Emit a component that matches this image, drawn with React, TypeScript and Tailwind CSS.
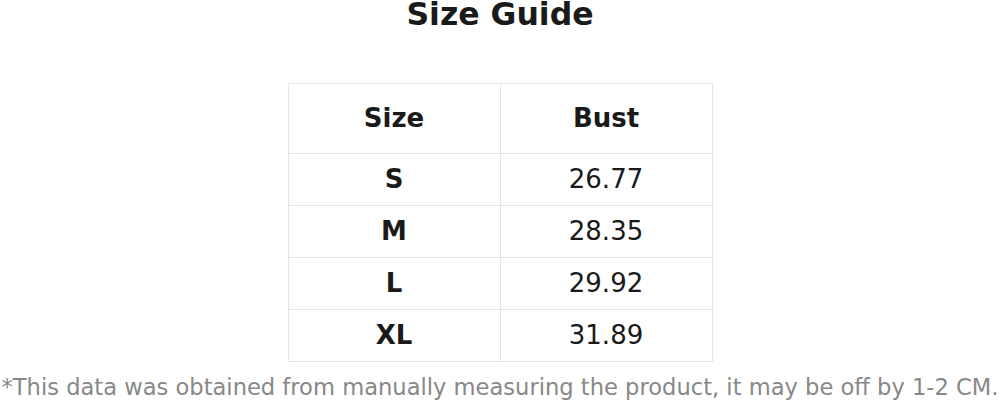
import React from "react";

const rows = [
  ["S", "26.77"],
  ["M", "28.35"],
  ["L", "29.92"],
  ["XL", "31.89"],
];

export default function App() {
  return (
    <div className="w-[1000px] h-[401px] bg-white flex flex-col items-center overflow-hidden text-[#1a1a1a]" style={{ fontFamily: '"DejaVu Sans", sans-serif' }}>
      <h1 className="text-[31.5px] font-bold leading-[28px] mt-0">Size Guide</h1>
      <table className="mt-[55px] w-[425px] border-collapse text-[26px]">
        <thead>
          <tr className="h-[70px]">
            <th className="border border-[#e6e6e6] w-1/2 font-bold">Size</th>
            <th className="border border-[#e6e6e6] w-1/2 font-bold">Bust</th>
          </tr>
        </thead>
        <tbody>
          {rows.map(([s, b]) => (
            <tr key={s} className="h-[52px]">
              <td className="border border-[#e6e6e6] text-center font-bold">{s}</td>
              <td className="border border-[#e6e6e6] text-center">{b}</td>
            </tr>
          ))}
        </tbody>
      </table>
      <p className="text-[22.6px] text-[#888888] whitespace-nowrap mt-[12px] leading-[26px]">*This data was obtained from manually measuring the product, it may be off by 1-2 CM.</p>
    </div>
  );
}
